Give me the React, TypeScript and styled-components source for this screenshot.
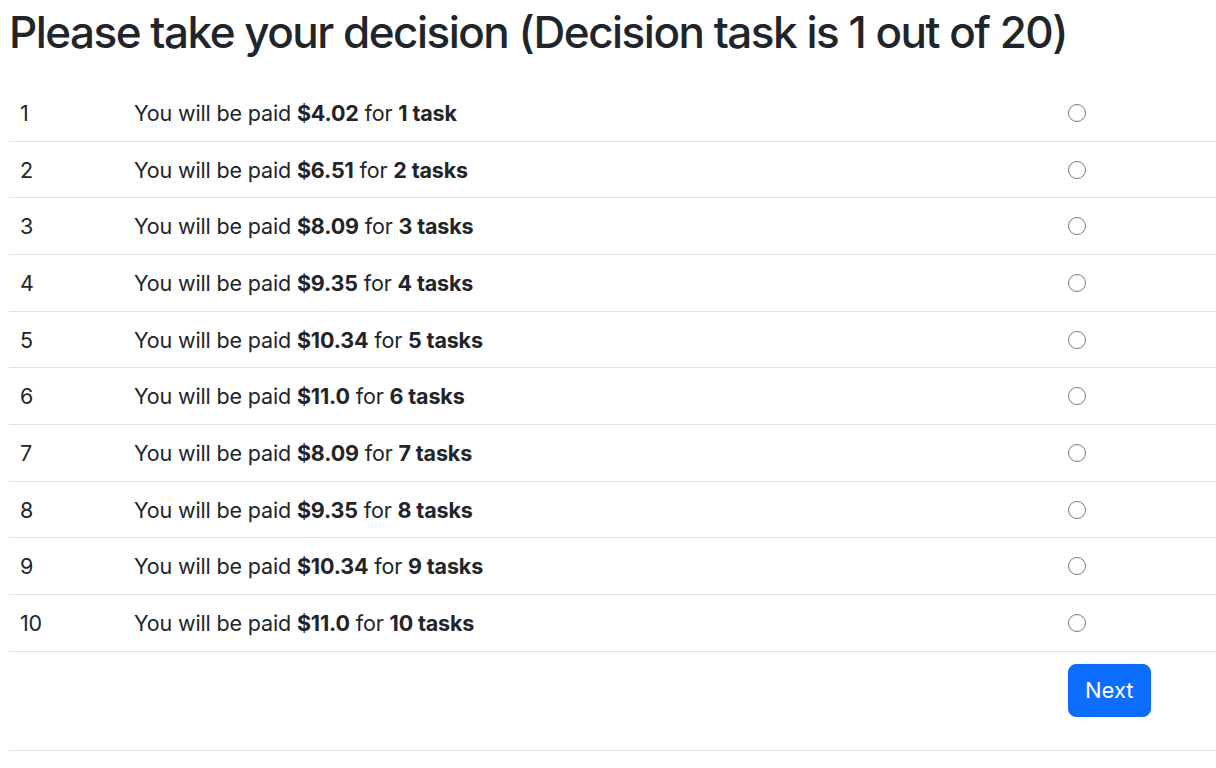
import React from "react";
import styled, { createGlobalStyle } from "styled-components";

const Global = createGlobalStyle`
  html, body { margin: 0; padding: 0; background: #fff; }
  body {
    font-family: Inter, "Noto Sans", "Liberation Sans", sans-serif;
    color: #212529;
  }
`;

const Page = styled.div`
  padding: 0 0 0 9px;
`;

const Title = styled.h1`
  margin: 0 0 24px 0;
  padding-top: 3px;
  font-size: 44px;
  line-height: 58px;
  font-weight: 500;
  color: #212529;
  letter-spacing: -1.5px;
`;

const Table = styled.table`
  width: 100%;
  border-collapse: collapse;
  table-layout: fixed;
  font-size: 21.5px;
  letter-spacing: -0.15px;
`;

const Row = styled.tr`
  border-bottom: 1px solid #dee2e6;
`;

const Cell = styled.td`
  padding: 12px 11px 10px;
  line-height: 33.67px;
  vertical-align: middle;
`;

const FooterCell = styled.td`
  padding: 12.5px 11px 33px;
  vertical-align: top;
`;

const Radio = styled.input.attrs({ type: "radio" })`
  appearance: none;
  -webkit-appearance: none;
  margin: -2px 0 0;
  width: 18px;
  height: 18px;
  border: 1.5px solid #7a7a7a;
  border-radius: 50%;
  background: #fff;
  display: block;
  box-sizing: border-box;
`;

const Button = styled.button`
  height: 52.5px;
  padding: 0 16px;
  border: 1.4px solid #0d6efd;
  background: #0d6efd;
  color: #fff;
  font-family: inherit;
  font-size: 22px;
  border-radius: 8px;
  cursor: pointer;
`;

const rows = [
  ["$4.02", "1 task"],
  ["$6.51", "2 tasks"],
  ["$8.09", "3 tasks"],
  ["$9.35", "4 tasks"],
  ["$10.34", "5 tasks"],
  ["$11.0", "6 tasks"],
  ["$8.09", "7 tasks"],
  ["$9.35", "8 tasks"],
  ["$10.34", "9 tasks"],
  ["$11.0", "10 tasks"],
];

export default function App() {
  return (
    <Page>
      <Global />
      <Title>Please take your decision (Decision task is 1 out of 20)</Title>
      <Table>
        <colgroup>
          <col style={{ width: 114 }} />
          <col style={{ width: 934 }} />
          <col />
        </colgroup>
        <tbody>
          {rows.map(([pay, tasks], i) => (
            <Row key={i}>
              <Cell>{i + 1}</Cell>
              <Cell>
                You will be paid <b>{pay}</b> for <b>{tasks}</b>
              </Cell>
              <Cell>
                <Radio name="choice" value={i + 1} />
              </Cell>
            </Row>
          ))}
          <Row>
            <FooterCell />
            <FooterCell />
            <FooterCell>
              <Button>Next</Button>
            </FooterCell>
          </Row>
        </tbody>
      </Table>
    </Page>
  );
}
